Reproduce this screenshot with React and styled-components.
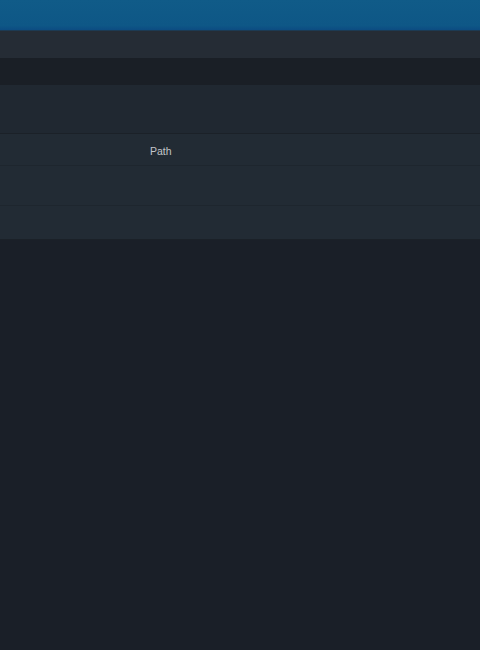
import React from 'react';
import styled, { createGlobalStyle } from 'styled-components';

const GlobalStyle = createGlobalStyle`
  html, body {
    margin: 0;
    padding: 0;
    background: #1a1f28;
    font-family: 'Liberation Sans', Arial, sans-serif;
  }
`;

function App() {
  return (
    <Page>
      <GlobalStyle />
      <TopBar />
      <ToolBar />
      <TabStrip />
      <Header />
      <List>
        <Row $height={32}>
          <Label>Path</Label>
        </Row>
        <Row $height={40} />
        <Row $height={34} />
      </List>
    </Page>
  );
}

export default App;

const Page = styled.div`
  display: flex;
  flex-direction: column;
  width: 480px;
  min-height: 650px;
  background: #1a1f28;
`;

const TopBar = styled.div`
  height: 30px;
  background: linear-gradient(to bottom, #105b88, #0e5786 85%, #0c4c82);
  border-bottom: 1px solid #1d3a52;
`;

const ToolBar = styled.div`
  height: 27px;
  background: #252c35;
`;

const TabStrip = styled.div`
  height: 27px;
  background: #1a1f26;
`;

const Header = styled.div`
  height: 48px;
  background: #202831;
  border-bottom: 1px solid #1b2128;
`;

const List = styled.div`
  display: flex;
  flex-direction: column;
  border-bottom: 1px solid #1b2128;
`;

const Row = styled.div`
  display: flex;
  align-items: center;
  height: ${(p) => p.$height - 1}px;
  padding-left: 150px;
  background: #222b34;
  border-bottom: 1px solid #1e262e;
  &:last-child {
    border-bottom: none;
  }
`;

const Label = styled.span`
  font-size: 10.5px;
  color: #c2c6ca;
  margin-top: 3px;
`;
